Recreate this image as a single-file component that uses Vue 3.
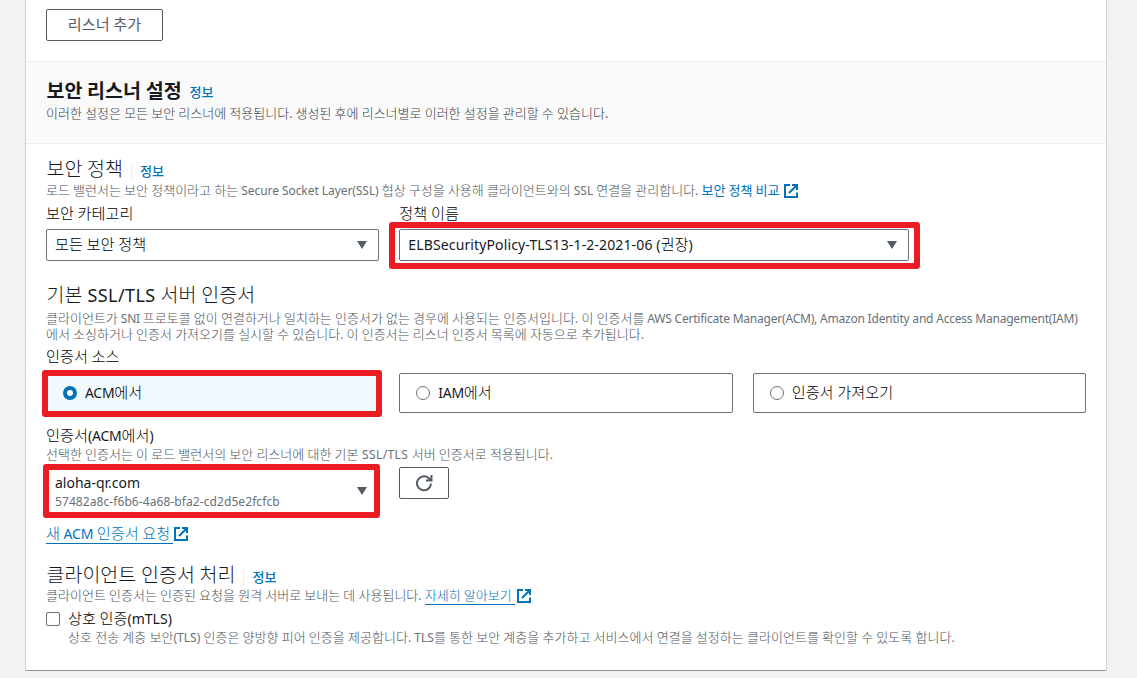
<script setup>
import { h } from 'vue'

// Splits mixed text so Hangul and Latin runs can be sized independently.
const T = (props) =>
  h('span', { class: 'txt' }, props.t.split(/([\uAC00-\uD7A3]+)/).filter(Boolean).map((part) =>
    h('span', { class: /[\uAC00-\uD7A3]/.test(part) ? 'ko' : /[A-Za-z0-9]{2}/.test(part) ? 'la' : 'sp' }, part)
  ))
T.props = ['t']

const Ext = () =>
  h('svg', { class: 'ext', viewBox: '0 0 14 14', width: 14, height: 14 }, [
    h('path', { d: 'M6 1H1v12h12V8.5M8 1h5v5M13 1L5 9', fill: 'none', stroke: 'currentColor', 'stroke-width': 2 })
  ])

const sources = [
  { label: 'ACM에서', on: true },
  { label: 'IAM에서', on: false },
  { label: '인증서 가져오기', on: false }
]
</script>

<template>
  <main class="page">
    <section class="panel">
      <div class="top"><button class="btn add"><T t="리스너 추가" /></button></div>
      <header class="band">
        <div class="row"><h2 class="title"><T t="보안 리스너 설정" /></h2><a class="info"><T t="정보" /></a></div>
        <p class="desc"><T t="이러한 설정은 모든 보안 리스너에 적용됩니다. 생성된 후에 리스너별로 이러한 설정을 관리할 수 있습니다." /></p>
      </header>

      <div class="body">
        <div class="row"><h3><T t="보안 정책" /></h3><a class="info bar"><T t="정보" /></a></div>
        <p class="desc first tight"><T t="로드 밸런서는 보안 정책이라고 하는 Secure Socket Layer(SSL) 협상 구성을 사용해 클라이언트와의 SSL 연결을 관리합니다. " /><a class="link medium"><T t="보안 정책 비교" /><Ext /></a></p>
        <div class="cols policy">
          <div>
            <label class="label"><T t="보안 카테고리" /></label>
            <div class="select"><T t="모든 보안 정책" /><i class="caret"></i></div>
          </div>
          <div class="name">
            <label class="label"><T t="정책 이름" /></label>
            <div class="select elb"><T t="ELBSecurityPolicy-TLS13-1-2-2021-06 (권장)" /><i class="caret"></i><b class="mark m1"></b></div>
          </div>
        </div>

        <h3 class="cert"><T t="기본 SSL/TLS 서버 인증서" /></h3>
        <p class="desc certdesc"><T t="클라이언트가 SNI 프로토콜 없이 연결하거나 일치하는 인증서가 없는 경우에 사용되는 인증서입니다. 이 인증서를 AWS Certificate Manager(ACM), Amazon Identity and Access Management(IAM)" /><br /><T t="에서 소싱하거나 인증서 가져오기를 실시할 수 있습니다. 이 인증서는 리스너 인증서 목록에 자동으로 추가됩니다." /></p>
        <label class="label source"><T t="인증서 소스" /></label>
        <div class="cols">
          <div v-for="s in sources" :key="s.label" class="tile" :class="{ on: s.on }">
            <i class="radio"></i><T :t="s.label" /><b v-if="s.on" class="mark m2"></b>
          </div>
        </div>

        <label class="label acm"><T t="인증서(ACM에서)" /></label>
        <p class="desc acmdesc"><T t="선택한 인증서는 이 로드 밸런서의 보안 리스너에 대한 기본 SSL/TLS 서버 인증서로 적용됩니다." /></p>
        <div class="cols">
          <div class="select tall">
            <div><div class="v1"><T t="aloha-qr.com" /></div><div class="v2"><T t="57482a8c-f6b6-4a68-bfa2-cd2d5e2fcfcb" /></div></div>
            <i class="caret"></i><b class="mark m3"></b>
          </div>
          <button class="btn refresh">
            <svg viewBox="0 0 18 18" width="18" height="18" fill="none" stroke="currentColor" stroke-width="2"><path d="M16 9.5A7 7 0 1 1 13.6 4L16 6.2M16.5 1v5.5H11" /></svg>
          </button>
        </div>
        <div class="request"><a class="link"><span class="under"><T t="새 ACM 인증서 요청" /></span><Ext /></a></div>

        <div class="row client"><h3><T t="클라이언트 인증서 처리" /></h3><a class="info bar"><T t="정보" /></a></div>
        <p class="desc learn"><T t="클라이언트 인증서는 인증된 요청을 원격 서버로 보내는 데 사용됩니다. " /><a class="link"><span class="under"><T t="자세히 알아보기" /></span><Ext /></a></p>
        <div class="check">
          <i class="box"></i>
          <div>
            <label class="label"><T t="상호 인증(mTLS)" /></label>
            <p class="desc"><T t="상호 전송 계층 보안(TLS) 인증은 양방향 피어 인증을 제공합니다. TLS를 통한 보안 계층을 추가하고 서비스에서 연결을 설정하는 클라이언트를 확인할 수 있도록 합니다." /></p>
          </div>
        </div>
      </div>
    </section>
  </main>
</template>

<style>
body { margin: 0; background: #f2f2f2; }
</style>

<style scoped>
.page { width: 1137px; height: 678px; box-sizing: border-box; overflow: hidden; padding: 0 30px 0 25px; background: #f2f2f2; color: #16191f; font: 14px/20px "Noto Sans", "Noto Sans CJK KR", sans-serif; white-space: nowrap; }
.page :deep(.ko) { font-family: "Noto Sans CJK KR", sans-serif; font-size: 1.085em; line-height: 0; font-weight: 300; }
.page :deep(.txt) { white-space: pre; }
h2, h3, p { margin: 0; }
.panel { height: 671px; box-sizing: border-box; background: #fff; border: 1px solid #cfd1d2; border-top: 0; border-bottom-color: #8f9292; border-radius: 0 0 2px 2px; }
.top { height: 61px; box-sizing: border-box; padding: 9px 20px 0; }
.btn { box-sizing: border-box; height: 32px; padding: 0; background: #fff; border: 1px solid #545b64; border-radius: 2px; color: #545b64; font: inherit; display: flex; align-items: center; justify-content: center; }
.add { width: 117px; padding-bottom: 1px; }
.add :deep(.ko) { font-weight: 400; }
.band { height: 83px; box-sizing: border-box; padding: 18px 20px 0; background: #fafafa; border: solid #eaeded; border-width: 1px 0; }
.row { display: flex; align-items: baseline; }
h2 { font-size: 18px; line-height: 22px; }
.title :deep(.ko) { font-weight: 700; }
h3 { font-size: 18px; line-height: 22px; font-weight: 400; }
h2, h3 { padding-left: 0.5px; }
.info { position: relative; top: -1px; font-size: 12px; line-height: 16px; color: #0073bb; margin-left: 8px; }
.info :deep(.ko) { font-weight: 500; }
.bar { top: 0; margin-left: 7.5px; border-left: 1px solid #eaeded; padding-left: 8.5px; }
.desc { font-size: 12px; line-height: 16px; color: #687078; }
.desc :deep(.ko) { color: #4c545c; }
.band .desc { margin-top: 4px; color: #545b64; }
.band .desc :deep(.ko) { color: #3a4149; }
.body { padding: 14px 20px 0; }
.first { margin-top: 3px; }
.learn { margin-top: 2px; padding-bottom: 1px; }
.tight :deep(.la) { letter-spacing: -0.06px; }
.link, .desc .link :deep(.ko) { color: #0073bb; }
.medium :deep(.ko) { font-weight: 400; }
.link :deep(.ext) { vertical-align: -3px; margin-left: 4px; }
.learn .link :deep(.ext) { margin-left: 2px; }
.learn .under { padding-right: 3px; }
.request .link :deep(.ext) { margin-left: 1px; vertical-align: -2px; }
.request .under { padding-right: 3px; }
.under { border-bottom: 1px solid #0073bb; }
.cols { display: grid; grid-template-columns: repeat(3, 1fr); column-gap: 20px; }
.policy { margin-top: 5px; }
.policy .select { margin-top: 5px; }
.name { grid-column: 2 / 4; width: 510px; }
.label { display: block; font-size: 14px; line-height: 20px; }
.label :deep(.ko), .select :deep(.ko), .tile :deep(.ko) { color: #000; }
.select { position: relative; box-sizing: border-box; height: 32px; padding: 0 11px 1px 8px; border: 1px solid #687078; border-radius: 2px; background: #fff; display: flex; align-items: center; }
.elb { padding-bottom: 0; }
.elb :deep(.la) { letter-spacing: 0.13px; }
.caret { margin-left: auto; border: solid transparent; border-width: 8px 5px 0; border-top-color: #545b64; }
.mark { position: absolute; border: 6px solid #ec1c24; border-radius: 3px; box-sizing: border-box; }
.m1 { left: -11px; top: -8px; width: 531px; height: 47px; }
.m2 { left: -5px; top: -4px; width: 340px; height: 47px; }
.m3 { left: -4px; top: -4px; width: 337px; height: 54px; }
.cert { margin-top: 23px; }
.cert :deep(.la) { letter-spacing: 0.4px; }
.certdesc { margin-top: 5px; }
.certdesc :deep(.la) { letter-spacing: -0.21px; }
.source { margin: 4px 0 6px; }
.tile { position: relative; box-sizing: border-box; height: 40px; padding: 0 0 1px 16px; border: 1px solid #687078; border-radius: 2px; display: flex; align-items: center; }
.tile :deep(.la) { letter-spacing: -0.3px; }
.on { background: #f1faff; border-color: #0073bb; }
.radio { box-sizing: border-box; width: 14px; height: 14px; margin-right: 8px; border: 1px solid #687078; border-radius: 50%; background: #fff; }
.on .radio { border: 4px solid #0073bb; }
.acm { margin-top: 13px; }
.acm :deep(.la) { letter-spacing: -0.2px; }
.tall { height: 48px; padding-bottom: 0; }
.v1 { line-height: 21px; }
.v2 { font-size: 12px; line-height: 17px; color: #687078; letter-spacing: 0.08px; }
.acmdesc { position: relative; top: 1px; margin-bottom: 5px; }
.acmdesc :deep(.la) { letter-spacing: 0.4px; }
.refresh { width: 50px; }
.request { margin-top: 9px; }
.request :deep(.la) { letter-spacing: -0.15px; }
.client { margin-top: 20px; }
.check { display: flex; margin-top: 4px; }
.check .desc { margin-top: 1px; letter-spacing: 0.02px; }
.box { box-sizing: border-box; width: 14px; height: 14px; margin: 3px 8px 0 0; border: 1px solid #687078; border-radius: 2px; }
</style>
